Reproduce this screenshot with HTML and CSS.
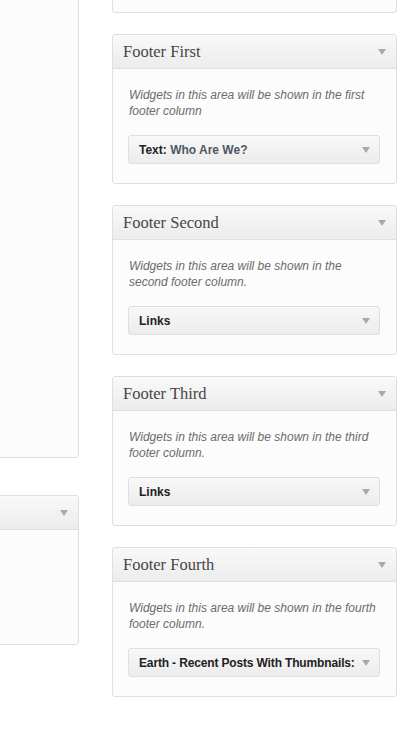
FILE: index.html
```html
<!DOCTYPE html>
<html lang="en">
<head>
    <meta charset="UTF-8">
    <title>Widgets</title>
    <link rel="stylesheet" href="styles.css">
</head>
<body>
    <div class="columns">
        <div class="col col-left">
            <div class="sidebar sidebar-tall"></div>
            <div class="sidebar">
                <div class="sidebar-head"><span class="arrow"></span></div>
            </div>
        </div>
        <div class="col col-right">
            <div class="sidebar sidebar-stub"></div>

            <div class="sidebar">
                <div class="sidebar-head">
                    <h3>Footer First</h3>
                    <span class="arrow"></span>
                </div>
                <div class="sidebar-body">
                    <p class="desc">Widgets in this area will be shown in the first footer column</p>
                    <div class="widget">
                        <span class="widget-title">Text: <span class="widget-name">Who Are We?</span></span>
                        <span class="arrow"></span>
                    </div>
                </div>
            </div>

            <div class="sidebar">
                <div class="sidebar-head">
                    <h3>Footer Second</h3>
                    <span class="arrow"></span>
                </div>
                <div class="sidebar-body">
                    <p class="desc">Widgets in this area will be shown in the second footer column.</p>
                    <div class="widget">
                        <span class="widget-title">Links</span>
                        <span class="arrow"></span>
                    </div>
                </div>
            </div>

            <div class="sidebar">
                <div class="sidebar-head">
                    <h3>Footer Third</h3>
                    <span class="arrow"></span>
                </div>
                <div class="sidebar-body">
                    <p class="desc">Widgets in this area will be shown in the third footer column.</p>
                    <div class="widget">
                        <span class="widget-title">Links</span>
                        <span class="arrow"></span>
                    </div>
                </div>
            </div>

            <div class="sidebar">
                <div class="sidebar-head">
                    <h3>Footer Fourth</h3>
                    <span class="arrow"></span>
                </div>
                <div class="sidebar-body">
                    <p class="desc">Widgets in this area will be shown in the fourth footer column.</p>
                    <div class="widget">
                        <span class="widget-title tight">Earth - Recent Posts With Thumbnails:</span>
                        <span class="arrow"></span>
                    </div>
                </div>
            </div>
        </div>
    </div>
</body>
</html>
```

FILE: styles.css
```css
body {
    margin: 0;
    background: #fff;
    font-family: "Liberation Sans", Arial, sans-serif;
    overflow: hidden;
}

.columns {
    display: flex;
    gap: 33px;
    margin-left: -206px;
}

.col {
    width: 285px;
    flex: none;
    display: flex;
    flex-direction: column;
    gap: 21px;
}

.col-left {
    margin-top: -40px;
    gap: 37px;
}

.sidebar {
    box-sizing: border-box;
    height: 150px;
    background: #fcfcfc;
    border: 1px solid #dfdfdf;
    border-radius: 3px;
}

.sidebar-tall {
    height: 498px;
}

.col-right .sidebar-stub {
    height: 40px;
    margin-top: -27px;
}

.sidebar-head {
    height: 33px;
    display: flex;
    align-items: center;
    padding: 0 10px 0 10px;
    background: linear-gradient(to bottom, #f9f9f9, #ececec);
    border-bottom: 1px solid #dfdfdf;
    border-radius: 3px 3px 0 0;
    justify-content: flex-end;
}

.sidebar-head h3 {
    margin: 0 auto 0 0;
    font-family: "Liberation Serif", Georgia, serif;
    font-weight: normal;
    font-size: 16.5px;
    color: #464646;
}

.arrow {
    flex: none;
    width: 0;
    height: 0;
    border-left: 4px solid transparent;
    border-right: 4px solid transparent;
    border-top: 6px solid #a9a9a9;
}

.sidebar-body {
    padding: 18px 16px 0 15px;
}

.desc {
    margin: 0 0 16px;
    font-size: 12px;
    line-height: 16px;
    font-style: italic;
    color: #6b6b6b;
    padding-left: 1px;
}

.widget {
    box-sizing: border-box;
    height: 29px;
    display: flex;
    align-items: center;
    justify-content: space-between;
    gap: 4px;
    padding: 0 9px 0 10px;
    background: linear-gradient(to bottom, #f8f8f8, #ececec);
    border: 1px solid #dfdfdf;
    border-radius: 3px;
}

.widget-title {
    font-size: 12px;
    font-weight: bold;
    color: #222;
    white-space: nowrap;
}

.widget-title.tight {
    letter-spacing: -0.15px;
}

.widget-name {
    color: #505862;
}
```
